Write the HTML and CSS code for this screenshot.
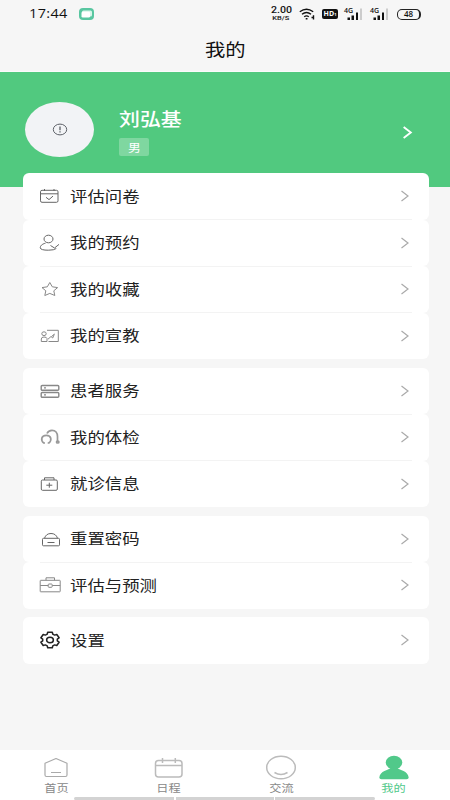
FILE: index.html
```html
<!DOCTYPE html>
<html lang="zh-CN">
<head>
<meta charset="utf-8">
<title>我的</title>
<link rel="stylesheet" href="styles.css">
</head>
<body>
<svg class="defs" width="0" height="0"><symbol id="chev" viewBox="0 0 10 12"><path d="M1.5 1 8 6 1.5 11"/></symbol>
<symbol id="signal" viewBox="0 0 20 14"><path d="M3.500 10.500h2.500v2.500H3.500zM7.500 8.500h2.500v4.500H7.500zM12 5.500h2v7.500h-2z" fill="#111"/><path d="M16 1.500h2V13h-2z" fill="#ccc"/></symbol></svg>
<div class="app">
  <div class="status">
    <span class="clock"><span class="wide">17:44</span></span>
    <svg class="chat" viewBox="0 0 15 12"><rect width="15" height="12" rx="4" fill="#58c6a0"/><rect x="3" y="2.500" width="10" height="6" rx="1.500" fill="#d9f5ea"/><rect x="2.500" y="3.800" width="8.500" height="5.700" rx="1.300" fill="#fff"/></svg>
    <span class="speed"><b>2.00</b><small>KB/S</small></span>
    <svg class="wifi" viewBox="0 0 17 12" fill="none" stroke="#111" stroke-width="1.400"><path d="M.8 3.800Q7.500-1.200 14.200 3.800M3 6.300Q7.500 2.800 12 6.300M5.200 8.700Q7.500 7 9.800 8.700"/><path d="M6.700 10.700h1.800M12.500 9.500h2.500M14.500 7.200v4.300"/></svg>
    <span class="hd">HD<small>1</small></span>
    <span class="cell"><small>4G</small><svg viewBox="0 0 20 14"><use href="#signal"/></svg></span>
    <span class="cell"><small>4G</small><svg viewBox="0 0 20 14"><use href="#signal"/></svg></span>
    <span class="battery">48</span>
  </div>
  <header class="title"><span class="wide">我的</span></header>
  <section class="profile">
    <div class="avatar"><svg viewBox="0 0 16 13" fill="none" stroke="#5c5f66"><ellipse cx="8" cy="6.500" rx="6.700" ry="5.400"/><path d="M8 3.500v3.800M8 8.300v1.200" stroke-width="1.300"/></svg></div>
    <div class="who"><div class="name"><span class="wide">刘弘基</span></div><div class="sex"><span class="wide">男</span></div></div>
    <svg class="go" viewBox="0 0 10 12"><use href="#chev"/></svg>
  </section>
  <main class="menu">
    <div class="group">
      <div class="row"><svg class="ico" viewBox="0 0 22 20"><rect x="1.500" y="4.300" width="17.500" height="12" rx="1.500"/><path d="M1.500 7.800H19M5.500 3v2M15 3v2M7 11.300l3 2.300 4-3.500"/></svg><span class="label"><span class="wide">评估问卷</span></span><svg class="arrow" viewBox="0 0 10 12"><use href="#chev"/></svg></div>
      <div class="row"><svg class="ico" viewBox="0 0 22 20"><ellipse cx="9.500" cy="6" rx="4.500" ry="3.800"/><path d="M6.500 10.200C3 11 1 13 1.300 15q.5 2.200 8 2.200 6 0 8-1.700M11.500 12.500l4 2.500 4.500-3.600"/></svg><span class="label"><span class="wide">我的预约</span></span><svg class="arrow" viewBox="0 0 10 12"><use href="#chev"/></svg></div>
      <div class="row"><svg class="ico light" viewBox="0 0 22 20"><path d="M10.800 3.500 13.300 7.800l5.300.8-3.800 3.200 1 4.700-5-2.100-5 2.100 1-4.700L3 8.600l5.300-.8z" stroke-linejoin="round"/></svg><span class="label"><span class="wide">我的收藏</span></span><svg class="arrow" viewBox="0 0 10 12"><use href="#chev"/></svg></div>
      <div class="row"><svg class="ico light" viewBox="0 0 22 20"><path d="M8 4.300H19.300v11.200H9.500M2.300 15.500v-2.500q0-2 2.700-2t3 1.500v3zM9 13.200l3-2.700 1.700 1.500 1.600-3.700M12.500 10.500l3-2.500"/><ellipse cx="5" cy="7.700" rx="2.200" ry="1.900"/></svg><span class="label"><span class="wide">我的宣教</span></span><svg class="arrow" viewBox="0 0 10 12"><use href="#chev"/></svg></div>
    </div>
    <div class="group">
      <div class="row"><svg class="ico server" viewBox="0 0 22 20"><rect x="2.200" y="4.500" width="17.600" height="4.800" rx="1"/><rect x="2.200" y="11.500" width="17.600" height="4.800" rx="1"/><path d="M5 6.900h2M5 13.900h2"/></svg><span class="label"><span class="wide">患者服务</span></span><svg class="arrow" viewBox="0 0 10 12"><use href="#chev"/></svg></div>
      <div class="row"><svg class="ico scope" viewBox="0 0 22 20"><path d="M6 16H4.800C1.500 13.500 2 8.300 7.300 8.300S13 13.500 9.800 16H8.700M8 6.500C9 4.300 11 3.300 13 3.300 16.500 3.300 18.500 6 18.500 9.500V15"/><ellipse cx="18.700" cy="15" rx="1.200" ry="1"/></svg><span class="label"><span class="wide">我的体检</span></span><svg class="arrow" viewBox="0 0 10 12"><use href="#chev"/></svg></div>
      <div class="row"><svg class="ico" viewBox="0 0 22 20"><rect x="2.300" y="6" width="16" height="10.300" rx="1.200"/><path d="M5.500 6V3.800h9.500V6M10.300 8.700v5M7.300 11.200h6"/></svg><span class="label"><span class="wide">就诊信息</span></span><svg class="arrow" viewBox="0 0 10 12"><use href="#chev"/></svg></div>
    </div>
    <div class="group">
      <div class="row"><svg class="ico" viewBox="0 0 22 20"><rect x="3.500" y="9.300" width="17" height="7.500" rx="1"/><path d="M5.500 9.300Q7 4.500 12 4.500T18.500 9.300M8.500 13.500h7"/></svg><span class="label"><span class="wide">重置密码</span></span><svg class="arrow" viewBox="0 0 10 12"><use href="#chev"/></svg></div>
      <div class="row"><svg class="ico light" viewBox="0 0 22 20"><rect x="1.200" y="5.300" width="20" height="11.500" rx=".5"/><path d="M7 5.300V2.800h8.500v2.500M1.200 10.500h8M13.200 10.500h8"/><rect x="9.200" y="9" width="4" height="3.300" rx=".8"/></svg><span class="label"><span class="wide">评估与预测</span></span><svg class="arrow" viewBox="0 0 10 12"><use href="#chev"/></svg></div>
    </div>
    <div class="group">
      <div class="row"><svg class="ico gear" viewBox="0 0 22 20"><path d="M8.200 4.200 8.700 2.200H13.300L13.800 4.200 15.600 5.100 17.800 4.500 20.100 7.800 18.300 9.100V10.900L20.100 12.200 17.800 15.500 15.600 14.900 13.800 15.800 13.300 17.800H8.700L8.200 15.800 6.400 14.900 4.200 15.500 1.900 12.200 3.700 10.900V9.100L1.900 7.800 4.200 4.500 6.400 5.100z" stroke-linejoin="round"/><ellipse cx="11" cy="10" rx="3.400" ry="2.800"/></svg><span class="label"><span class="wide">设置</span></span><svg class="arrow" viewBox="0 0 10 12"><use href="#chev"/></svg></div>
    </div>
  </main>
  <nav class="tabs">
    <div class="tab"><svg viewBox="0 0 32 26"><path d="M5 8.200 16 3.500 27 8.200V20q0 1.500-1.500 1.500h-19Q5 21.500 5 20zM11 17.500h10" stroke-linejoin="round"/></svg><span class="wide">首页</span></div>
    <div class="tab"><svg viewBox="0 0 32 26" class="cal"><rect x="2.500" y="5.500" width="26.500" height="16.500" rx="3"/><path d="M2.500 10.500H29M9.500 3v5M22.300 3v5"/></svg><span class="wide">日程</span></div>
    <div class="tab"><svg viewBox="0 0 32 26" class="cal"><ellipse cx="16" cy="12.500" rx="14.300" ry="11.300"/><path d="M9.500 17.500q6.500 4 13 0"/></svg><span class="wide">交流</span></div>
    <div class="tab active"><svg viewBox="0 0 32 26"><ellipse cx="16" cy="7.500" rx="8.300" ry="6.800"/><path d="M12.500 13h7c2 2.500 10.500 2.500 11.200 9.500Q30.700 24.300 28.500 24.300H3.500Q1.300 24.300 1.300 22.500C2 15.500 10.500 15.500 12.500 13z"/></svg><span class="wide">我的</span></div>
  </nav>
  <div class="homebar"><i></i><i></i><i></i></div>
</div>
</body>
</html>
```
FILE: styles.css
```css
* { box-sizing: border-box; }
body { margin: 0; font-family: "Noto Sans CJK SC", sans-serif; }
svg { display: block; flex: none; }
.defs { position: absolute; }
.app { position: relative; display: flex; flex-direction: column; width: 450px; height: 800px; background: #f6f6f6; overflow: hidden; }
.wide { display: inline-block; transform: scaleX(1.16); transform-origin: left center; white-space: nowrap; }

.status { display: flex; align-items: center; height: 28px; padding-left: 29px; color: #111; font-family: "Open Sans", sans-serif; }
.clock { width: 50px; font-size: 12.500px; line-height: 28px; letter-spacing: .3px; }
.chat { width: 15px; height: 12px; }
.speed { display: flex; flex-direction: column; align-items: center; width: 22px; margin-left: 176px; font-family: Roboto, sans-serif; }
.speed b { height: 7px; font-size: 8.500px; line-height: 7px; font-weight: 500; transform: scaleX(1.25); }
.speed small { height: 6px; font-size: 6px; line-height: 6px; font-weight: 500; transform: scaleX(1.250); margin-top: 1px; }
.wifi { width: 17px; height: 12px; margin-left: 7px; }
.hd { width: 16px; height: 10px; margin-left: 6px; border-radius: 2px; background: #111; color: #fff; font-size: 7px; font-weight: 700; line-height: 10px; text-align: center; }
.hd small { font-size: 4px; }
.cell { position: relative; width: 20px; height: 14px; margin-left: 6px; }
.cell small { position: absolute; left: 0; top: 0; font-size: 7px; line-height: 8px; font-weight: 600; }
.cell svg { width: 20px; height: 14px; }
.battery { width: 24px; height: 11px; margin-left: 7px; border: 1.500px solid #222; border-right-width: 2px; border-radius: 5px; font-size: 8px; font-weight: 600; line-height: 8px; text-align: center; }

.title { height: 44px; padding-left: 204.500px; border-bottom: 1px solid #fbfbfb; color: #111; font-size: 17.500px; line-height: 42px; }
.profile { display: flex; height: 115px; background: #51c97f; color: #fff; }
.avatar { display: flex; align-items: center; justify-content: center; width: 69px; height: 55px; margin: 30px 0 0 25px; border-radius: 50%; background: #f2f3f6; }
.avatar svg { width: 16px; height: 13px; }
.who { width: 120px; margin: 33px 0 0 25px; }
.name { height: 26px; font-size: 18px; font-weight: 500; line-height: 26px; }
.sex { width: 30px; height: 18px; margin-top: 7px; padding-left: 8.500px; border-radius: 2px; background: #7fd7a0; font-size: 11px; line-height: 18px; }
.go { width: 11px; height: 15px; margin: 53px 0 0 163px; fill: none; stroke: #fff; stroke-width: 1.700; }

.menu { display: flex; flex-direction: column; gap: 8.500px; margin: -14px 21px 0 23px; }
.row { position: relative; display: flex; align-items: center; height: 46.500px; padding-left: 16px; border-radius: 6px; background: #fff; }
.row + .row::before { content: ""; position: absolute; top: -.5px; left: 17px; right: 17px; height: 1px; background: #f3f3f3; }
.ico { width: 22px; height: 20px; fill: none; stroke: #666; stroke-width: 1; }
.light { stroke: #888; }
.server { stroke-width: 1.400; stroke: #888; }
.scope { stroke-width: 1.700; stroke: #999; }
.gear { stroke: #222; stroke-width: 1.500; }
.label { flex: 1; margin: -1px 0 0 9px; color: #222; font-size: 15px; line-height: 24px; }
.arrow { width: 10px; height: 12px; margin-right: 19px; fill: none; stroke: #aaa; stroke-width: 1.200; }

.tabs { display: grid; grid-template-columns: repeat(4, 112.500px); height: 50px; margin-top: auto; background: #fff; }
.tab { display: flex; flex-direction: column; align-items: center; padding-top: 5px; color: #888; font-size: 10.500px; line-height: 15px; }
.tab svg { width: 32px; height: 26px; fill: none; stroke: #aaa; stroke-width: 1.200; }
.tab .cal { stroke: #bbb; stroke-width: 1.500; }
.tab .wide { transform-origin: center; margin-top: -1px; }
.tab.active { color: #51c98a; }
.tab.active svg { fill: #51c98a; stroke: none; }
.homebar { position: absolute; left: 74px; bottom: 0; display: grid; grid-template-columns: 100px 98px 100px; gap: 1.500px; width: 301px; height: 3px; border-radius: 2px; overflow: hidden; }
.homebar i { background: #d3d3d3; }
```
